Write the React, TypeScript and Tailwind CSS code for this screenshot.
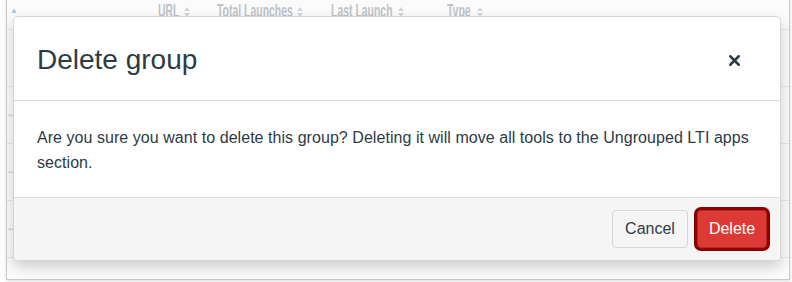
import { X } from "lucide-react";

const headers = [
    { label: "URL", box: "w-[22px]", col: "w-[59px]" },
    { label: "Total Launches", box: "w-[76px]", col: "w-[114px]" },
    { label: "Last Launch", box: "w-[63px]", col: "w-[116px]" },
    { label: "Type", box: "w-[26px]", col: "w-[60px]" },
];

function SortIcon() {
    return (
        <svg width="6" height="10" viewBox="0 0 6 10" className="ml-[4px] shrink-0" aria-hidden="true">
            <path d="M3 0L6 4H0Z M3 10L6 6H0Z" fill="#d3d6d9" />
        </svg>
    );
}

export default function App() {
    return (
        <div className="h-[282px] w-[792px] overflow-hidden bg-white pl-[6px] font-['Liberation_Sans',Arial,sans-serif] text-[#2d3b45]">
            {/* screenshot frame */}
            <div className="relative mt-[-2px] h-[282px] w-[784px] overflow-hidden border border-[#c9c9c9] bg-[#fbfbfb] shadow-[0_1px_3px_rgba(0,0,0,0.15)]">
                {/* faded table behind the overlay */}
                <div className="flex h-[31px] items-start border-b border-[#e6e6e6]">
                    <span className="w-[151px] pl-[3px] pt-[6px] text-[8px] text-[#a9c3e0]">▲</span>
                    {headers.map((h) => (
                        <div key={h.label} className={`flex items-center text-[#bfc3c7] ${h.col}`}>
                            <div className={`shrink-0 ${h.box}`}>
                                <span className="inline-block origin-left scale-x-[0.55] whitespace-nowrap text-[19px] font-bold leading-[24px]">
                                    {h.label}
                                </span>
                            </div>
                            <SortIcon />
                        </div>
                    ))}
                </div>
                {[0, 1, 2, 3].map((i) => (
                    <div key={i} className="flex h-[57px] items-center border-b border-[#e6e6e6] pl-[1px] text-[10px] text-[#c6d3e3]">
                        {i > 0 ? "ꟷ" : ""}
                    </div>
                ))}

                {/* dialog */}
                <div className="absolute left-[6px] top-[17px] w-[768px] overflow-hidden rounded-[5px] border border-[#d5d8db] bg-white shadow-[0_6px_14px_rgba(0,0,0,0.18)]">
                    <div className="flex h-[84px] items-center justify-between border-b border-[#d5d8db] pl-[23px] pr-[37px] pt-[3px]">
                        <h2 className="text-[28px] font-normal leading-none">Delete group</h2>
                        <X size={17} strokeWidth={3.6} className="text-[#2d3b45]" />
                    </div>
                    <div className="px-[23px] pb-[22px] pt-[24px] text-[16px] leading-[25px] tracking-[0.05px]">
                        Are you sure you want to delete this group? Deleting it will move all tools to the Ungrouped LTI apps section.
                    </div>
                    <div className="flex items-center justify-end gap-[9px] border-t border-[#dfe2e4] bg-[#f5f5f5] py-[12px] pr-[13px]">
                        <button className="h-[38px] w-[76px] rounded-[4px] border border-[#d5d8db] bg-[#f5f5f5] text-[16px] text-[#2d3b45]">
                            Cancel
                        </button>
                        <button className="h-[38px] w-[70px] rounded-[4px] border border-[#b22a26] bg-[#dd3a36] text-[16px] text-white shadow-[0_0_0_3px_#8e0000]">
                            Delete
                        </button>
                    </div>
                </div>
            </div>
        </div>
    );
}
